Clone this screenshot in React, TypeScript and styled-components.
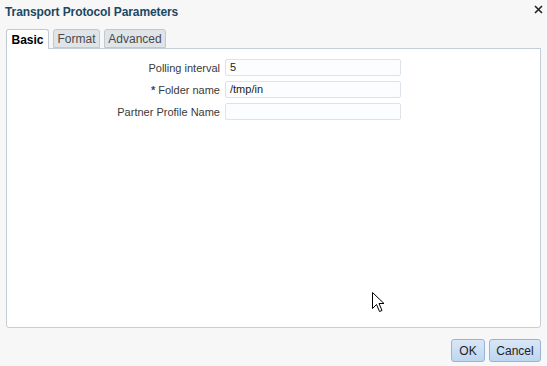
import React from "react";
import styled, { createGlobalStyle } from "styled-components";

const Global = createGlobalStyle`
  html, body { margin: 0; padding: 0; }
  body {
    width: 547px; height: 366px; overflow: hidden;
    background: #f7f7f7;
    font-family: "Liberation Sans", Arial, sans-serif;
  }
`;

const Dialog = styled.div`
  position: relative;
  width: 547px;
  height: 366px;
  box-sizing: border-box;
  display: flex;
  flex-direction: column;
  background: #f7f7f7;
`;

const TitleBar = styled.div`
  height: 23px;
  display: flex;
  align-items: center;
  justify-content: space-between;
  padding: 0 4px 0 5px;
`;

const Title = styled.h1`
  margin: 0;
  font-size: 12px;
  font-weight: bold;
  color: #1b4763;
  letter-spacing: -0.1px;
`;

const Close = styled.span`
  width: 9px;
  height: 9px;
  display: flex;
  margin-top: -5px;
`;

const Body = styled.div`
  display: flex;
  flex-direction: column;
  padding: 6px 6px 0 6px;
`;

const TabStrip = styled.div`
  display: flex;
  gap: 4px;
  height: 19px;
  align-items: flex-end;
`;

const Tab = styled.div<{ $active?: boolean; $w: number }>`
  box-sizing: border-box;
  width: ${(p) => p.$w}px;
  height: ${(p) => (p.$active ? "20px" : "19px")};
  margin-bottom: ${(p) => (p.$active ? "-1px" : "0")};
  display: flex;
  align-items: center;
  justify-content: center;
  font-size: 12px;
  font-weight: ${(p) => (p.$active ? "bold" : "normal")};
  color: ${(p) => (p.$active ? "#000" : "#4a4a4a")};
  background: ${(p) => (p.$active ? "#fff" : "#dfe4e9")};
  border: 1px solid #bfcad5;
  border-bottom: ${(p) => (p.$active ? "none" : "1px solid #bfcad5")};
  border-radius: 3px 3px 0 0;
  position: relative;
  z-index: ${(p) => (p.$active ? 2 : 1)};
`;

const Panel = styled.div`
  box-sizing: border-box;
  height: 280px;
  width: 535px;
  background: #fff;
  border: 1px solid #c3cdd7;
  border-radius: 0 0 3px 3px;
  padding: 10px 0 0 0;
  display: flex;
  flex-direction: column;
  gap: 5px;
`;

const Row = styled.div`
  display: flex;
  align-items: center;
  height: 17px;
`;

const Label = styled.label`
  width: 218px;
  text-align: right;
  font-size: 11px;
  color: #3a3a3a;
  padding-right: 5px;
  box-sizing: border-box;
  white-space: nowrap;
`;

const Star = styled.span`
  color: #1b4f86;
  font-weight: bold;
  margin-right: 3px;
`;

const Input = styled.div`
  box-sizing: border-box;
  width: 176px;
  height: 17px;
  border: 1px solid #dce3ea;
  border-radius: 2px;
  background: #fbfdfe;
  font-size: 11px;
  color: #222;
  padding: 0 4px;
  line-height: 15px;
`;

const Footer = styled.div`
  display: flex;
  justify-content: flex-end;
  gap: 4px;
  padding: 11px 0 0 0;
`;

const Button = styled.button<{ $w: number }>`
  box-sizing: border-box;
  width: ${(p) => p.$w}px;
  height: 23px;
  padding: 0;
  font-family: "Liberation Sans", Arial, sans-serif;
  font-size: 12px;
  color: #222;
  border: 1px solid #95b4d8;
  border-radius: 3px;
  background: linear-gradient(#d8e7f7, #bed6f0);
`;

const Cursor = styled.svg`
  position: absolute;
  left: 372px;
  top: 292px;
`;

export default function App() {
  return (
    <>
      <Global />
      <Dialog>
        <TitleBar>
          <Title>Transport Protocol Parameters</Title>
          <Close>
            <svg width="9" height="9" viewBox="0 0 9 9">
              <path d="M1 1 L8 8 M8 1 L1 8" stroke="#222" strokeWidth="1.6" />
            </svg>
          </Close>
        </TitleBar>
        <Body>
          <TabStrip>
            <Tab $active $w={43}>Basic</Tab>
            <Tab $w={47}>Format</Tab>
            <Tab $w={62}>Advanced</Tab>
          </TabStrip>
          <Panel>
            <Row>
              <Label>Polling interval</Label>
              <Input>5</Input>
            </Row>
            <Row>
              <Label>
                <Star>*</Star>Folder name
              </Label>
              <Input>/tmp/in</Input>
            </Row>
            <Row>
              <Label>Partner Profile Name</Label>
              <Input />
            </Row>
          </Panel>
          <Footer>
            <Button $w={34}>OK</Button>
            <Button $w={52}>Cancel</Button>
          </Footer>
        </Body>
        <Cursor width="13" height="21" viewBox="0 0 13 21">
          <path
            d="M0.5 0.5 L0.5 16.5 L4.5 12.5 L7.5 19.5 L10 18.5 L7 11.5 L12 11.5 Z"
            fill="#fff"
            stroke="#000"
            strokeWidth="1"
          />
        </Cursor>
      </Dialog>
    </>
  );
}
